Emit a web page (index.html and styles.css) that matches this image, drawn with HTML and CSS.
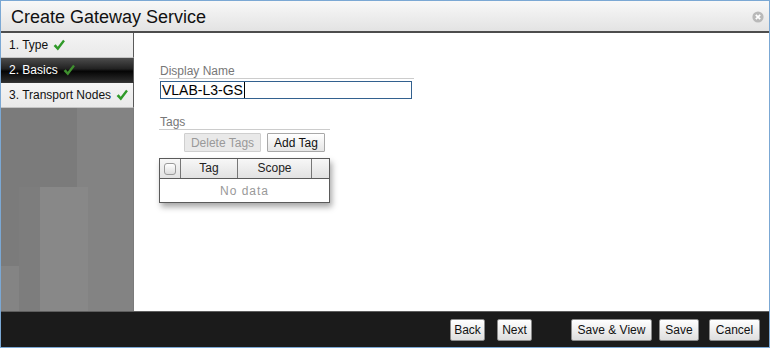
FILE: index.html
```html
<!DOCTYPE html>
<html lang="en">
<head>
    <meta charset="UTF-8">
    <title>Create Gateway Service</title>
    <link rel="stylesheet" href="styles.css">
</head>
<body>
    <div class="dialog">
        <div class="titlebar">
            <h1>Create Gateway Service</h1>
            <span class="close">
                <svg width="12" height="12" viewBox="0 0 12 12">
                    <circle cx="6" cy="6" r="5.6" fill="#b9b9b9"/>
                    <path d="M3.8 3.8 L8.2 8.2 M8.2 3.8 L3.8 8.2" stroke="#fff" stroke-width="1.7"/>
                </svg>
            </span>
        </div>

        <div class="main">
            <div class="sidebar">
                <ul class="steps">
                    <li class="step">1. Type
                        <svg class="check" width="12" height="12" viewBox="0 0 12 12"><path d="M0.6 6.9 L2.7 5.2 L4.7 7.7 L10.1 0.7 L11.9 2.2 L4.9 11.6 Z"/></svg>
                    </li>
                    <li class="step active">2. Basics
                        <svg class="check" width="12" height="12" viewBox="0 0 12 12"><path d="M0.6 6.9 L2.7 5.2 L4.7 7.7 L10.1 0.7 L11.9 2.2 L4.9 11.6 Z"/></svg>
                    </li>
                    <li class="step">3. Transport Nodes
                        <svg class="check" width="12" height="12" viewBox="0 0 12 12"><path d="M0.6 6.9 L2.7 5.2 L4.7 7.7 L10.1 0.7 L11.9 2.2 L4.9 11.6 Z"/></svg>
                    </li>
                </ul>
                <div class="skyline"></div>
            </div>

            <div class="content">
                <div class="field-label name-label">Display Name</div>
                <div class="text-input">VLAB-L3-GS<span class="caret"></span></div>

                <div class="field-label tags-label">Tags</div>
                <div class="tag-actions">
                    <button class="small-btn btn-delete" disabled>Delete Tags</button>
                    <button class="small-btn btn-add">Add Tag</button>
                </div>

                <div class="grid">
                    <div class="grid-head">
                        <div class="col col-check"><span class="checkbox"></span></div>
                        <div class="col col-tag">Tag</div>
                        <div class="col col-scope">Scope</div>
                        <div class="col col-rest"></div>
                    </div>
                    <div class="grid-empty">No data</div>
                </div>
            </div>
        </div>

        <div class="footer">
            <div class="btn-group">
                <button class="btn btn-back">Back</button>
                <button class="btn btn-next">Next</button>
            </div>
            <div class="btn-group">
                <button class="btn btn-saveview">Save &amp; View</button>
                <button class="btn btn-save">Save</button>
                <button class="btn btn-cancel">Cancel</button>
            </div>
        </div>
    </div>
</body>
</html>
```

FILE: styles.css
```css
* {
    box-sizing: border-box;
}

body {
    margin: 0;
    font-family: "Liberation Sans", Arial, sans-serif;
    background-color: #fff;
}

.dialog {
    width: 770px;
    height: 348px;
    border: 1px solid #7ba8d4;
    display: flex;
    flex-direction: column;
}

/* title bar */
.titlebar {
    height: 32px;
    flex: none;
    display: flex;
    align-items: center;
    justify-content: space-between;
    padding: 0 5px 0 10px;
    background: linear-gradient(#f8f8f8, #e3e3e3);
    border-bottom: 2px solid #4d4d4d;
}

.titlebar h1 {
    margin: 0;
    padding-top: 2px;
    font-size: 18px;
    font-weight: normal;
    color: #111;
}

.close {
    display: flex;
    margin-top: 1px;
}

/* body */
.main {
    flex: 1;
    display: flex;
}

.sidebar {
    width: 133px;
    flex: none;
    display: flex;
    flex-direction: column;
}

.steps {
    list-style: none;
    margin: 0;
    padding: 0;
}

.step {
    height: 25px;
    line-height: 24px;
    padding-left: 8px;
    font-size: 12px;
    color: #111;
    background: linear-gradient(#f4f4f4, #e9e9e9);
    border-bottom: 1px solid #c4c4c4;
    border-right: 1px solid #5a5a5a;
    display: flex;
    align-items: center;
}

.step.active {
    color: #fff;
    background: linear-gradient(#4c4c4c 0%, #222 45%, #050505 55%, #2c2c2c 100%);
    border-bottom-color: #333;
}

.check {
    margin-left: 5px;
    fill: #2f9a28;
}

.step.active .check {
    fill: #3f8f2f;
}

.skyline {
    flex: 1;
    background-color: #7b7b7b;
    background-image:
        linear-gradient(#888, #888),
        linear-gradient(#838383, #838383),
        linear-gradient(#848484, #848484),
        linear-gradient(#7d7d7d, #7d7d7d);
    background-repeat: no-repeat;
    background-size: 48px 100%, 56px 100%, 18px 100%, 21px 100%;
    background-position: 39px 79px, 76px 0, 0 158px, 18px 79px;
}

/* form */
.content {
    flex: 1;
    padding: 31px 0 0 25px;
}

.field-label {
    font-size: 12px;
    line-height: 14px;
    color: #777;
    padding-left: 1px;
    border-bottom: 1px solid #ccc;
}

.name-label {
    width: 255px;
}

.text-input {
    width: 252px;
    height: 18px;
    margin: 2px 0 0 1px;
    padding-left: 1px;
    border: 1px solid #33618f;
    font-size: 14px;
    line-height: 16px;
    color: #000;
    display: flex;
}

.caret {
    width: 1px;
    height: 16px;
    margin-left: 1px;
    background-color: #000;
}

.tags-label {
    width: 171px;
    margin-top: 16px;
}

.tag-actions {
    display: flex;
    gap: 6px;
    margin: 3px 0 0 25px;
}

.small-btn {
    height: 19px;
    padding: 0;
    font-family: inherit;
    font-size: 12px;
    color: #111;
    background: linear-gradient(#fff, #e6e6e6);
    border: 1px solid #a8a8a8;
    border-radius: 1px;
}

.small-btn:disabled {
    color: #999;
    background: #e9e9e9;
    border-color: #cfcfcf;
}

.btn-delete { width: 77px; }
.btn-add { width: 58px; }

.grid {
    width: 171px;
    margin-top: 6px;
    border: 1px solid #5a5a5a;
    box-shadow: 2px 4px 6px rgba(0, 0, 0, 0.35);
}

.grid-head {
    display: flex;
    height: 20px;
    border-bottom: 1px solid #5a5a5a;
    background: linear-gradient(#f7f7f7, #e2e2e2);
    font-size: 12px;
    line-height: 19px;
    color: #222;
}

.col {
    text-align: center;
    border-right: 1px solid #777;
}

.col-check {
    width: 21px;
    display: flex;
    align-items: center;
    justify-content: center;
}

.col-tag {
    width: 57px;
}

.col-scope {
    width: 74px;
}

.col-rest {
    flex: 1;
    border-right: none;
}

.checkbox {
    width: 12px;
    height: 12px;
    border: 1px solid #9a9a9a;
    border-radius: 3px;
    background: linear-gradient(#fff, #dcdcdc);
}

.grid-empty {
    height: 23px;
    padding-top: 3px;
    line-height: 18px;
    text-align: center;
    font-size: 12px;
    letter-spacing: 1px;
    color: #999;
}

/* footer */
.footer {
    height: 36px;
    flex: none;
    display: flex;
    align-items: center;
    justify-content: flex-end;
    gap: 39px;
    padding-right: 9px;
    background-color: #1b1b1b;
    border-top: 1px solid #5e5e5e;
}

.btn-group {
    display: flex;
    gap: 8px;
}

.btn {
    height: 22px;
    padding: 0;
    font-family: inherit;
    font-size: 12px;
    color: #111;
    background: linear-gradient(#fff, #dedede);
    border: 1px solid #8a8a8a;
    border-radius: 2px;
}

.btn-back { width: 35px; }
.btn-next { width: 35px; margin-left: 4px; }
.btn-saveview { width: 81px; }
.btn-save { width: 40px; margin-left: -1px; }
.btn-cancel { width: 51px; margin-left: 2px; }
```
